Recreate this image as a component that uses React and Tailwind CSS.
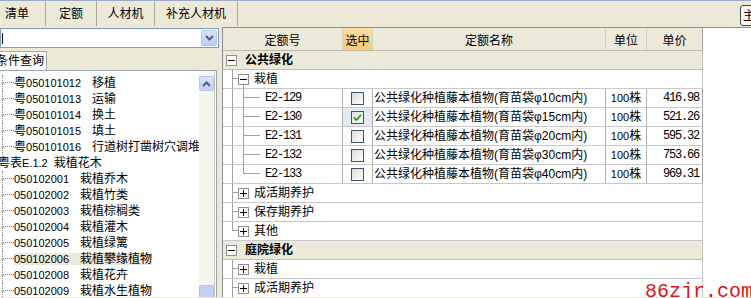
import React from "react";

const LINE = "border-[#a0a0a0]";

const items = [
  { code: "E2-129", size: "10", price: "416.98" },
  { code: "E2-130", size: "15", price: "521.26", checked: true },
  { code: "E2-131", size: "20", price: "595.32" },
  { code: "E2-132", size: "30", price: "753.66" },
  { code: "E2-133", size: "40", price: "969.31", last: true },
];

const leftRows = [
  { code: "粤050101012", name: "移植", w: "w-[78px]" },
  { code: "粤050101013", name: "运输", w: "w-[78px]" },
  { code: "粤050101014", name: "换土", w: "w-[78px]" },
  { code: "粤050101015", name: "填土", w: "w-[78px]" },
  { code: "粤050101016", name: "行道树打凿树穴调堆土", w: "w-[78px]" },
  { header: true },
  { code: "050102001", name: "栽植乔木", w: "w-[66px]" },
  { code: "050102002", name: "栽植竹类", w: "w-[66px]" },
  { code: "050102003", name: "栽植棕榈类", w: "w-[66px]" },
  { code: "050102004", name: "栽植灌木", w: "w-[66px]" },
  { code: "050102005", name: "栽植绿篱", w: "w-[66px]" },
  { code: "050102006", name: "栽植攀缘植物", w: "w-[66px]", sel: true },
  { code: "050102008", name: "栽植花卉", w: "w-[66px]" },
  { code: "050102009", name: "栽植水生植物", w: "w-[66px]" },
];

function Box({ plus }) {
  return (
    <div className="w-[11px] h-[11px] border border-[#8f8f8f] bg-white grid place-items-center shrink-0">
      <div className="col-start-1 row-start-1 w-[7px] h-px bg-black" />
      {plus && <div className="col-start-1 row-start-1 w-px h-[7px] bg-black" />}
    </div>
  );
}

function GroupRow({ label }) {
  return (
    <div className="flex items-center h-[19px] w-[480px] border-b border-r border-[#c2c0b6] bg-[#ebe9da]">
      <div className="ml-[3px]">
        <Box />
      </div>
      <span className="ml-[8px] font-bold text-[12px] leading-none text-black">{label}</span>
    </div>
  );
}

function SubRow({ label, plus, last, expanded }) {
  return (
    <div className="flex h-[19px] w-[480px] border-b border-r border-[#c8c8c8] bg-white">
      <div className="w-[15px] self-stretch flex flex-col shrink-0">
        <div className={`h-[9px] ml-[9px] border-l border-b ${LINE}`} />
        <div className={last ? "flex-1" : `flex-1 ml-[9px] border-l ${LINE}`} />
      </div>
      <div className="flex flex-col w-[11px] shrink-0">
        <div className="h-[4px]" />
        <Box plus={plus} />
        <div className={expanded ? `flex-1 ml-[5px] border-l ${LINE}` : "flex-1"} />
      </div>
      <span className="ml-[5px] self-center text-[12px] leading-none text-black">{label}</span>
    </div>
  );
}

function Checkbox({ checked }) {
  return (
    <div className="w-[13px] h-[13px] border border-[#3d5470] bg-gradient-to-br from-[#dcdcd5] to-white flex items-center justify-center">
      {checked && (
        <svg width="9" height="9" viewBox="0 0 9 9">
          <path d="M1 4.5 L3.5 7 L8 1.8" fill="none" stroke="#21a121" strokeWidth="1.8" />
        </svg>
      )}
    </div>
  );
}

function ItemRow({ code, size, price, checked, last }) {
  return (
    <div className="flex h-[19px] w-[480px] border-b border-[#c8c8c8] bg-white text-[12px] leading-none text-black">
      <div className="w-[120px] flex border-r border-[#b0b0b0] shrink-0">
        <div className="w-[15px] flex shrink-0">
          <div className={`ml-[9px] border-l ${LINE}`} />
        </div>
        <div className="w-[22px] flex flex-col shrink-0">
          <div className={`h-[9px] ml-[5px] border-l border-b ${LINE}`} />
          <div className={last ? "flex-1" : `flex-1 ml-[5px] border-l ${LINE}`} />
        </div>
        <span className="ml-[5px] self-center font-['Liberation_Mono',monospace] text-[12px] tracking-[-1.2px]">
          {code}
        </span>
      </div>
      <div
        className={
          checked
            ? "w-[30px] flex items-center justify-center border-r border-[#b0b0b0] bg-[#e4eaf3] shrink-0"
            : "w-[30px] flex items-center justify-center border-r border-[#b0b0b0] shrink-0"
        }
      >
        <Checkbox checked={checked} />
      </div>
      <div className="w-[233px] flex items-center pl-[1px] border-r border-[#b0b0b0] shrink-0 whitespace-nowrap overflow-hidden">
        公共绿化种植藤本植物(育苗袋φ{size}cm内)
      </div>
      <div className="w-[41px] flex items-center justify-center border-r border-[#b0b0b0] shrink-0">
        <span className="text-[11px]">100</span>株
      </div>
      <div className="w-[56px] flex items-center justify-end pr-[3px] border-r border-[#a0a0a0] shrink-0 font-['Liberation_Mono',monospace] text-[12px] tracking-[-1.2px]">
        {price}
      </div>
    </div>
  );
}

function LeftRow({ row }) {
  if (row.header) {
    return (
      <div className="h-[16px] flex items-center whitespace-nowrap text-[12px] leading-none text-black ml-[-2px]">
        <span>粤表</span>
        <span className="text-[11px]">E.1.2</span>
        <span className="ml-[6px]">栽植花木</span>
      </div>
    );
  }
  return (
    <div className="h-[16px] flex items-stretch whitespace-nowrap text-[12px] leading-none text-black">
      <div className="w-[12px] ml-[2px] flex flex-col shrink-0">
        <div className="h-[8px] border-l border-b border-dotted border-[#8a8a8a]" />
        <div className="flex-1 border-l border-dotted border-[#8a8a8a]" />
      </div>
      <div
        className={
          row.sel
            ? "flex items-center bg-[#ebe9dc] my-[2px]"
            : "flex items-center my-[2px]"
        }
      >
        <span className={`${row.w} text-[11px] shrink-0`}>
          {row.code.startsWith("粤") ? (
            <>
              <span className="text-[12px]">粤</span>
              {row.code.slice(1)}
            </>
          ) : (
            row.code
          )}
        </span>
        <span>{row.name}</span>
      </div>
    </div>
  );
}

export default function App() {
  return (
    <div className="w-[751px] h-[298px] overflow-hidden bg-[#ece9d8] relative font-['Liberation_Sans','Noto_Sans_CJK_SC',sans-serif] text-black">
      {/* tab bar */}
      <div className="h-[26px] flex border-t border-[#9aaac8] text-[12px] leading-none">
        <div className="w-[46px] flex items-center pl-[5px] border-r border-[#a9a89f] shrink-0">清单</div>
        <div className="w-[51px] flex items-center justify-center border-r border-[#a9a89f] shrink-0">定额</div>
        <div className="w-[58px] flex items-center justify-center border-r border-[#a9a89f] shrink-0">人材机</div>
        <div className="w-[83px] flex items-center justify-center border-r border-[#a9a89f] shrink-0">补充人材机</div>
        <div className="flex-1" />
        <div className="mt-[4px] h-[21px] w-[22px] mr-[-11px] rounded-[3px] border border-[#3c4a60] bg-[#f5f4ef] flex items-center pl-[2px] shrink-0">
          主
        </div>
      </div>

      {/* body */}
      <div className="flex h-[271px]">
        {/* left panel */}
        <div className="w-[222px] flex flex-col shrink-0">
          <div className="mt-[2px] h-[20px] w-[219px] border border-[#7f9db9] bg-white flex items-center">
            <div className="ml-[1px] w-px h-[11px] bg-black" />
            <div className="ml-auto mr-px w-[16px] h-[16px] rounded-[2px] bg-gradient-to-b from-[#d8e3fb] to-[#b9cdf5] border border-[#b7c7ea] flex items-center justify-center">
              <svg width="9" height="6" viewBox="0 0 9 6">
                <path d="M1 1 L4.5 4.5 L8 1" fill="none" stroke="#4d6185" strokeWidth="2" />
              </svg>
            </div>
          </div>
          <div className="mt-[3px] h-[19px] w-[47px] border-t border-r border-[#9ca6b4] bg-[#fbfbf8] flex items-center overflow-hidden">
            <span className="ml-[-4px] whitespace-nowrap text-[12px] leading-none">条件查询</span>
          </div>
          <div className="w-[217px] flex-1 border-t border-r border-[#9ca6b4] bg-white flex overflow-hidden pr-px">
            <div className="flex-1 overflow-hidden pt-[4px]">
              {leftRows.map((r, i) => (
                <LeftRow key={i} row={r} />
              ))}
            </div>
            <div className="w-[16px] border-r border-[#c9c7bc] bg-[#f6f5f0] flex flex-col shrink-0">
              <div className="mt-[5px] h-[15px] rounded-[2px] bg-gradient-to-b from-[#dbe5fb] to-[#bccff6] border border-[#b7c7ea] flex items-center justify-center">
                <svg width="9" height="6" viewBox="0 0 9 6">
                  <path d="M1 5 L4.5 1.5 L8 5" fill="none" stroke="#4d6185" strokeWidth="2" />
                </svg>
              </div>
              <div className="flex-1" />
              <div className="h-[12px] rounded-t-[2px] bg-[#bfd1f7] border border-b-0 border-[#aec2ec]" />
            </div>
          </div>
        </div>

        {/* right panel */}
        <div className="flex-1 mt-[1px] border-l border-t border-[#8e8f8f] bg-white overflow-hidden">
          <div className="h-[23px] w-[480px] flex border-b border-[#bdbaab] bg-[#ebe9da] text-[12px] leading-none">
            <div className="w-[120px] flex items-center justify-center pt-[3px] border-r border-[#d6d2c2] shrink-0">定额号</div>
            <div className="w-[30px] flex items-center justify-center pt-[3px] bg-gradient-to-b from-[#fbdfa6] to-[#f6c978] border-r border-[#d6d2c2] shrink-0">选中</div>
            <div className="w-[233px] flex items-center justify-center pt-[3px] border-r border-[#d6d2c2] shrink-0">定额名称</div>
            <div className="w-[41px] flex items-center justify-center pt-[3px] border-r border-[#d6d2c2] shrink-0">单位</div>
            <div className="w-[56px] flex items-center justify-center pt-[3px] border-r border-[#a0a0a0] shrink-0">单价</div>
          </div>
          <GroupRow label="公共绿化" />
          <SubRow label="栽植" expanded />
          {items.map((it) => (
            <ItemRow key={it.code} {...it} />
          ))}
          <SubRow label="成活期养护" plus />
          <SubRow label="保存期养护" plus />
          <SubRow label="其他" plus last />
          <GroupRow label="庭院绿化" />
          <SubRow label="栽植" plus />
          <SubRow label="成活期养护" plus />
        </div>
      </div>

      {/* watermark */}
      <div className="absolute right-[-2px] bottom-[-4px] font-['Liberation_Mono',monospace] text-[20px] leading-none text-[#d8141b] whitespace-nowrap">
        86zjr.com
      </div>
    </div>
  );
}
